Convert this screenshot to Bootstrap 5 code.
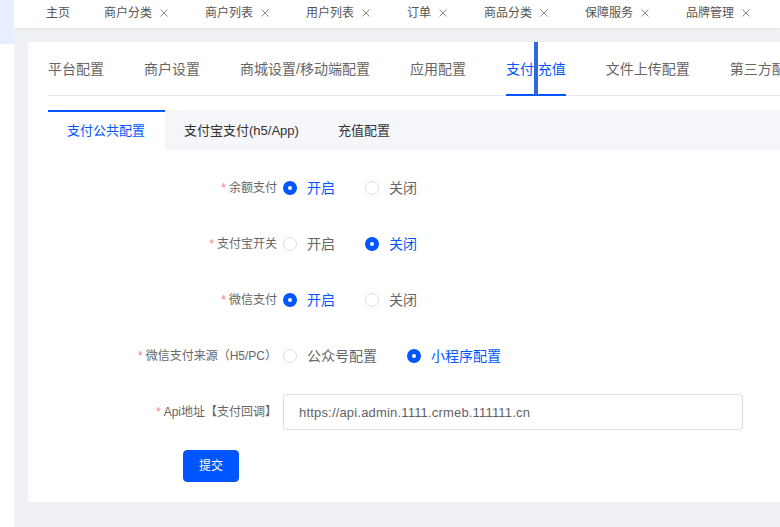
<!DOCTYPE html>
<html lang="zh">
<head>
<meta charset="utf-8">
<title>支付/充值</title>
<link rel="stylesheet" href="https://cdn.jsdelivr.net/npm/bootstrap@5.3.0/dist/css/bootstrap.min.css">
<style>
html,body{height:100%;overflow:hidden}
body{font-family:"Liberation Sans","Noto Sans CJK SC",sans-serif;background:#f0f1f5;color:#606266;font-size:12px}
.side-rail{width:14px;flex:none;background:#fff;height:527px}
.side-active{height:44px;background:#e6eeff}
.main-pane{width:766px;flex:none;height:527px;overflow:hidden}
.top-tabs{height:28px;background:#fff;box-shadow:0 1px 3px rgba(0,0,0,.05);padding-left:32px;color:#555;white-space:nowrap}
.top-item{margin-right:37px;line-height:26px;height:26px}
.top-item:first-child{margin-right:34px}
.top-x{width:8px;height:8px;margin-left:8px;color:#8a8a8a;margin-top:-1px}
.cfg-card{margin:14px 0 0 14px;width:1000px;height:460px;background:#fff;border-radius:4px;padding:0 20px;position:relative}
.outer-tabs{height:54px;border-bottom:1px solid #e6e7ef;gap:40px;font-size:14px;white-space:nowrap;color:#666}
.outer-item{height:54px;line-height:54px}
.outer-on{color:#0256ff;border-bottom:2px solid #0256ff}
.drag-bar{position:absolute;left:506px;top:0;width:4px;height:53px;background:#2f6bdc}
.inner-tabs{margin-top:14px;height:40px;background:#f5f6fa;font-size:13px;color:#333;white-space:nowrap}
.inner-item{padding:0 20px 0 19px;line-height:38px;height:40px;border-top:2px solid transparent}
.inner-on{background:#fff;color:#0256ff;border-top-color:#0256ff}
.cfg-form{padding-top:20px}
.cfg-row{height:36px;margin-bottom:20px}
.cfg-label{width:235px;flex:none;text-align:right;padding-right:6px;color:#666;white-space:nowrap}
.req{color:#f98080;margin-right:3px}
.opt{margin-right:30px;font-size:14px;color:#666;height:36px}
.opt-on{color:#0256ff}
.form-check-input.dot{width:14px;height:14px;margin:0 10px 0 0;border:1px solid #dcdde6;flex:none;background-image:none}
.form-check-input.dot:checked{background-color:#fff;background-image:none;border:5px solid #0256ff}
.form-check-input.dot:focus{box-shadow:none}
.url-field{width:460px;height:36px;font-size:13px;letter-spacing:.18px;color:#606266;padding:0 15px;border:1px solid #dcdde6;border-radius:4px;font-family:inherit}
.btn-submit{margin-left:135px;width:56px;height:32px;padding:0;background:#0256ff;border-color:#0256ff;font-size:12px;border-radius:4px}
</style>
</head>
<body>
<div class="d-flex">
  <div class="side-rail"><div class="side-active"></div></div>
  <div class="main-pane">
    <div class="top-tabs d-flex">
      <span class="top-item">主页</span>
      <span class="top-item d-inline-flex align-items-center">商户分类<svg class="top-x" viewBox="0 0 8 8"><path d="M.5.5l7 7M7.5.5l-7 7" stroke="currentColor" fill="none"/></svg></span>
      <span class="top-item d-inline-flex align-items-center">商户列表<svg class="top-x" viewBox="0 0 8 8"><path d="M.5.5l7 7M7.5.5l-7 7" stroke="currentColor" fill="none"/></svg></span>
      <span class="top-item d-inline-flex align-items-center">用户列表<svg class="top-x" viewBox="0 0 8 8"><path d="M.5.5l7 7M7.5.5l-7 7" stroke="currentColor" fill="none"/></svg></span>
      <span class="top-item d-inline-flex align-items-center">订单<svg class="top-x" viewBox="0 0 8 8"><path d="M.5.5l7 7M7.5.5l-7 7" stroke="currentColor" fill="none"/></svg></span>
      <span class="top-item d-inline-flex align-items-center">商品分类<svg class="top-x" viewBox="0 0 8 8"><path d="M.5.5l7 7M7.5.5l-7 7" stroke="currentColor" fill="none"/></svg></span>
      <span class="top-item d-inline-flex align-items-center">保障服务<svg class="top-x" viewBox="0 0 8 8"><path d="M.5.5l7 7M7.5.5l-7 7" stroke="currentColor" fill="none"/></svg></span>
      <span class="top-item d-inline-flex align-items-center">品牌管理<svg class="top-x" viewBox="0 0 8 8"><path d="M.5.5l7 7M7.5.5l-7 7" stroke="currentColor" fill="none"/></svg></span>
    </div>
    <div class="cfg-card">
      <div class="outer-tabs d-flex">
        <span class="outer-item">平台配置</span>
        <span class="outer-item">商户设置</span>
        <span class="outer-item">商城设置/移动端配置</span>
        <span class="outer-item">应用配置</span>
        <span class="outer-item outer-on">支付/充值</span>
        <span class="outer-item">文件上传配置</span>
        <span class="outer-item">第三方配置</span>
      </div>
      <div class="drag-bar"></div>
      <div class="inner-tabs d-flex">
        <span class="inner-item inner-on">支付公共配置</span>
        <span class="inner-item">支付宝支付(h5/App)</span>
        <span class="inner-item">充值配置</span>
      </div>
      <form class="cfg-form">
        <div class="cfg-row d-flex align-items-center">
          <div class="cfg-label"><span class="req">*</span>余额支付</div>
          <label class="opt opt-on d-flex align-items-center"><input class="form-check-input dot" type="radio" name="a" checked>开启</label>
          <label class="opt d-flex align-items-center"><input class="form-check-input dot" type="radio" name="a">关闭</label>
        </div>
        <div class="cfg-row d-flex align-items-center">
          <div class="cfg-label"><span class="req">*</span>支付宝开关</div>
          <label class="opt d-flex align-items-center"><input class="form-check-input dot" type="radio" name="b">开启</label>
          <label class="opt opt-on d-flex align-items-center"><input class="form-check-input dot" type="radio" name="b" checked>关闭</label>
        </div>
        <div class="cfg-row d-flex align-items-center">
          <div class="cfg-label"><span class="req">*</span>微信支付</div>
          <label class="opt opt-on d-flex align-items-center"><input class="form-check-input dot" type="radio" name="c" checked>开启</label>
          <label class="opt d-flex align-items-center"><input class="form-check-input dot" type="radio" name="c">关闭</label>
        </div>
        <div class="cfg-row d-flex align-items-center">
          <div class="cfg-label"><span class="req">*</span>微信支付来源（H5/PC）</div>
          <label class="opt d-flex align-items-center"><input class="form-check-input dot" type="radio" name="d">公众号配置</label>
          <label class="opt opt-on d-flex align-items-center"><input class="form-check-input dot" type="radio" name="d" checked>小程序配置</label>
        </div>
        <div class="cfg-row d-flex align-items-center">
          <div class="cfg-label"><span class="req">*</span>Api地址【支付回调】</div>
          <input class="form-control url-field" type="text" value="https://api.admin.1111.crmeb.111111.cn">
        </div>
        <button type="button" class="btn btn-primary btn-submit">提交</button>
      </form>
    </div>
  </div>
</div>
<script src="https://cdn.jsdelivr.net/npm/bootstrap@5.3.0/dist/js/bootstrap.bundle.min.js"></script>
</body>
</html>
